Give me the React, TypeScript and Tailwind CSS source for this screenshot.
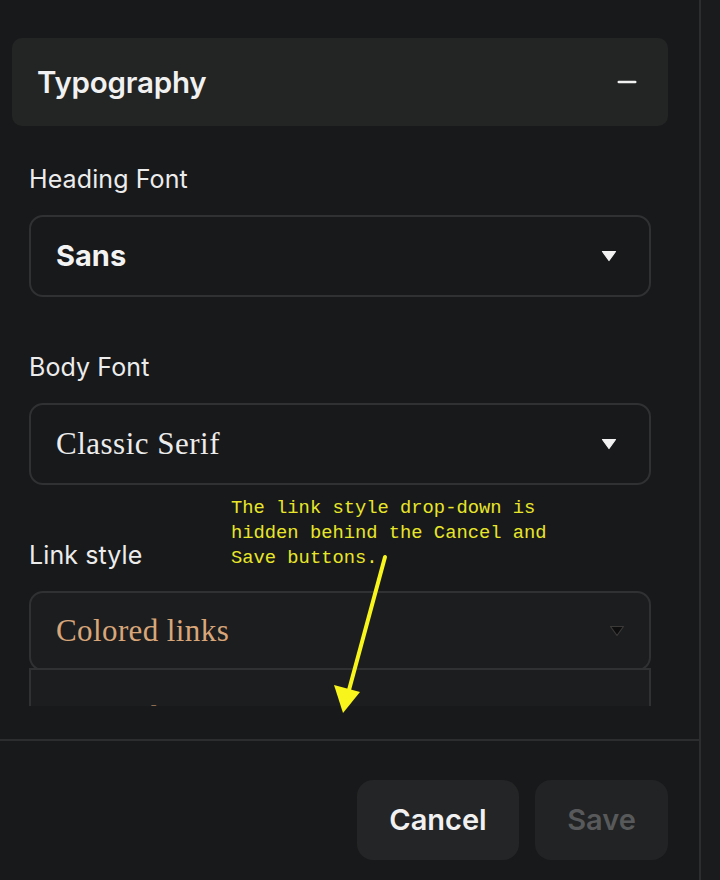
import { Minus } from "lucide-react";

const serif = { fontFamily: "'Liberation Serif', 'DejaVu Serif', serif" };

const Caret = ({ dark }: { dark?: boolean }) => (
  <svg width="16" height="12" viewBox="0 0 16 12" className="shrink-0">
    <path
      d="M1.5 1.5 L14.5 1.5 L8 10.5 Z"
      fill={dark ? "#0e0e0f" : "#f2f2f2"}
      stroke={dark ? "#3b3a38" : "#f2f2f2"}
      strokeWidth="1.2"
      strokeLinejoin="round"
    />
  </svg>
);

const Field = ({ label, children }: { label: string; children: React.ReactNode }) => (
  <div className="flex flex-col">
    <label className="text-[25px] leading-[28px] tracking-[0.1px] text-[#ececec] font-normal">{label}</label>
    <div className="mt-[22px]">{children}</div>
  </div>
);

export default function App() {
  return (
    <div
      className="flex h-[880px] w-[720px] bg-[#18191b] overflow-hidden"
      style={{ fontFamily: "Inter, 'Noto Sans', sans-serif" }}
    >
      <div className="relative flex w-[701px] flex-col border-r-2 border-[#2c2d2f]">
        {/* scrolling settings area */}
        <div className="h-[706px] overflow-hidden pl-3 pr-[31px] pt-[38px]">
          <div className="flex h-[88px] items-center justify-between rounded-[10px] bg-[#232525] pl-[25px] pr-[27px]">
            <h2 className="text-[29.5px] font-semibold tracking-[-0.2px] text-[#f1f1f1]">Typography</h2>
            <Minus size={28} strokeWidth={2.3} className="text-[#f1f1f1]" />
          </div>

          <div className="flex flex-col gap-[56px] px-[17px] pt-[39px]">
            <Field label="Heading Font">
              <div className="flex h-[82px] items-center justify-between rounded-[14px] border-2 border-[#303133] bg-[#18191b] pl-[25px] pr-[32px]">
                <span className="text-[29px] font-bold text-[#f3f3f3]">Sans</span>
                <Caret />
              </div>
            </Field>

            <Field label="Body Font">
              <div className="flex h-[82px] items-center justify-between rounded-[14px] border-2 border-[#303133] bg-[#18191b] pl-[25px] pr-[32px]">
                <span className="text-[31px] tracking-[0.5px] text-[#ececec]" style={serif}>
                  Classic Serif
                </span>
                <Caret />
              </div>
            </Field>

            <Field label="Link style">
              <div className="relative">
                <div className="flex h-[80px] items-center justify-between rounded-[14px] border-2 border-[#303133] bg-[#1c1d1f] pl-[25px] pr-[24px]">
                  <span className="text-[31px] tracking-[0.4px] text-[#d8a679]" style={serif}>
                    Colored links
                  </span>
                  <Caret dark />
                </div>
                <div className="absolute left-0 right-0 top-[77px] h-[120px] border-x-2 border-t-2 border-[#303133] bg-[#1c1d1f] pl-[25px] pt-[32px]">
                  <span className="block text-[31px] leading-none tracking-[0.4px] text-[#d8a679]" style={serif}>
                    Colored links
                  </span>
                </div>
              </div>
            </Field>
          </div>
        </div>

        {/* footer */}
        <div className="mt-[33px] flex flex-1 items-start justify-end gap-4 border-t-2 border-[#2c2d2f] pr-[31px] pt-[39px]">
          <button className="h-[80px] w-[162px] rounded-[16px] bg-[#242526] text-[29px] font-semibold text-[#f1f1f1]">
            Cancel
          </button>
          <button className="h-[80px] w-[133px] rounded-[16px] bg-[#222324] text-[29px] font-semibold text-[#58595a]">
            Save
          </button>
        </div>

        {/* annotation overlay */}
        <div
          className="absolute left-[231px] top-[496px] text-[18.8px] leading-[25px] text-[#e8e62a]"
          style={{ fontFamily: "'Liberation Mono', 'DejaVu Sans Mono', monospace" }}
        >
          <p>The link style drop-down is</p>
          <p>hidden behind the Cancel and</p>
          <p>Save buttons.</p>
        </div>
        <svg className="absolute left-[320px] top-[550px]" width="80" height="170" viewBox="0 0 80 170">
          <line x1="65" y1="7" x2="29" y2="140" stroke="#f7f51c" strokeWidth="4" strokeLinecap="round" />
          <path d="M14 135 L40 142 L23 163 Z" fill="#f7f51c" />
        </svg>
      </div>
      <div className="flex-1 bg-[#1a1b1d]" />
    </div>
  );
}
